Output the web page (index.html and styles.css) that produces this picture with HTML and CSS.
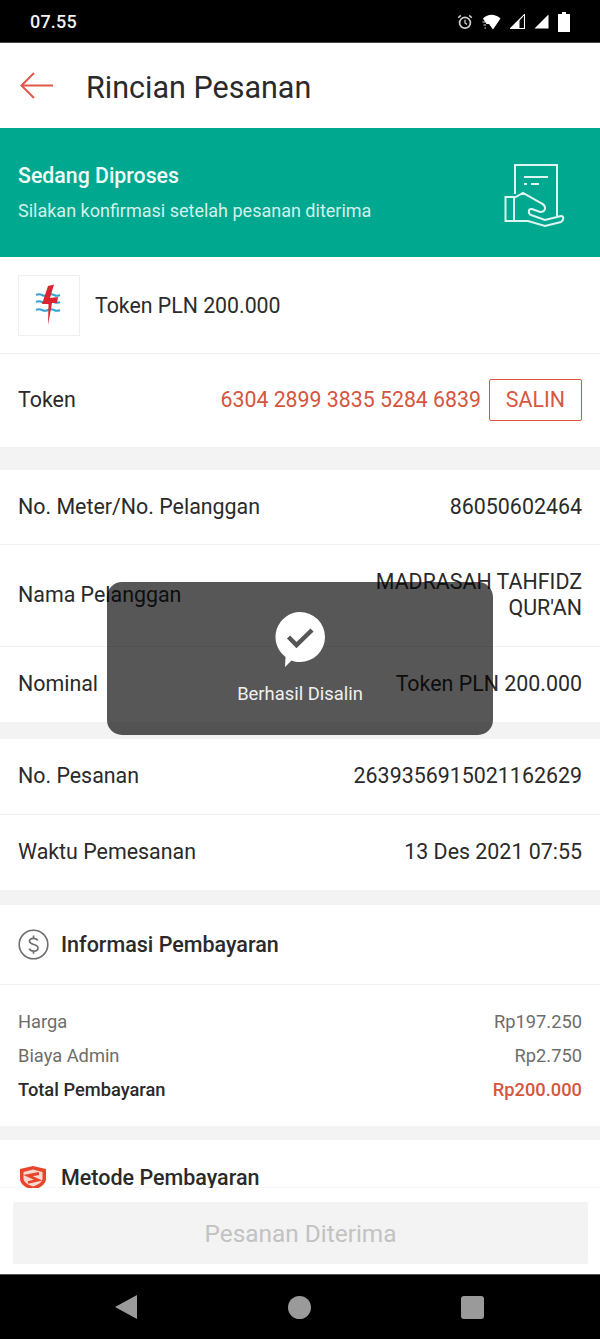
FILE: index.html
```html
<!DOCTYPE html>
<html lang="id">
<head>
<meta charset="utf-8">
<title>Rincian Pesanan</title>
<link rel="stylesheet" href="styles.css">
</head>
<body>
<div class="phone">
  <div class="statusbar">
    <span class="time">07.55</span>
    <div class="status-icons">
      <svg width="16" height="16" viewBox="0 0 16 16"><circle cx="8" cy="8.800" r="5.400" fill="none" stroke="#cfcfcf" stroke-width="1.700"/><path d="M8 5.800v3.200l2 1.400" fill="none" stroke="#cfcfcf" stroke-width="1.300"/><path d="M1.200 3.800 3.800 1.400M14.800 3.800 12.200 1.400" stroke="#cfcfcf" stroke-width="1.500"/></svg>
      <svg width="19" height="16" viewBox="0 0 19 16"><path d="M1 4.500C6-.5 13-.5 18.500 4.500L11 15.500 7 10H4.500z" fill="#fff"/><path d="M.5 8h3M1.500 11h2.500M2.500 14h1.500" stroke="#ddd" stroke-width="1.200"/></svg>
      <svg width="15" height="15" viewBox="0 0 15 15"><path d="M.5 14.500 14.500.5v14z" fill="none" stroke="#fff" stroke-width="1.100"/><path d="M.5 14.500 9.500 5.500v9z" fill="#fff"/></svg>
      <svg width="15" height="15" viewBox="0 0 15 15"><path d="M.5 14.500 14.500.5v14z" fill="#fff"/></svg>
      <svg width="12" height="20" viewBox="0 0 12 20"><path d="M4 0h4v2h4v18H0V2h4z" fill="#fff"/></svg>
    </div>
  </div>

  <header class="appbar">
    <svg class="back" width="36" height="32" viewBox="0 0 36 32"><path d="M34 15.500H3M15 3 2.500 15.500 15 28" fill="none" stroke="#e2574a" stroke-width="2"/></svg>
    <h1 class="title">Rincian Pesanan</h1>
  </header>

  <section class="banner">
    <div class="banner-text">
      <div class="banner-title">Sedang Diproses</div>
      <div class="banner-sub">Silakan konfirmasi setelah pesanan diterima</div>
    </div>
    <svg class="banner-icon" width="62" height="64" viewBox="503 163 62 64" fill="none" stroke="#dcf5f0" stroke-width="2">
      <path d="M515 194V165H557V216"/>
      <path d="M524 177H548M524 184h3M531 184h8"/>
      <path d="M505.500 197H514V221H505.500zM514 198 523 193 541 203C547 206 546 212 540 212L532 209C528 208 528 214 531 215L545 220 561 216C564 216 564 220 561 222L545 226 528 221H514"/>
    </svg>
  </section>

  <section class="product">
    <div class="logo">
      <svg width="30" height="44" viewBox="0 0 30 44">
        <path d="M2 12q3-1.500 6 0t6 0 6 0 6 0M2 19q3-1.500 6 0t6 0 6 0 6 0M2 27q3-1.500 6 0t6 0 6 0 6 0" fill="none" stroke="#3ba3d0" stroke-width="2"/>
        <path d="M14 3 20 1.500 16 15 24 14 23 20 18 20 14 42 14.500 21 8 21z" fill="#d92432"/>
      </svg>
    </div>
    <span class="product-name">Token PLN 200.000</span>
  </section>

  <section class="row row-token">
    <span class="token-label">Token</span>
    <div class="token-value">
      <span class="token-code">6304 2899 3835 5284 6839</span>
      <span class="copy-btn">SALIN</span>
    </div>
  </section>

  <div class="gap gap-22"></div>

  <section class="row row-75 line"><span>No. Meter/No. Pelanggan</span><span>86050602464</span></section>
  <section class="row row-101 line"><span>Nama Pelanggan</span><span class="multi">MADRASAH TAHFIDZ<br>QUR'AN</span></section>
  <section class="row row-75"><span>Nominal</span><span>Token PLN 200.000</span></section>

  <div class="gap gap-17"></div>

  <section class="row row-76 line"><span>No. Pesanan</span><span>2639356915021162629</span></section>
  <section class="row row-75"><span>Waktu Pemesanan</span><span>13 Des 2021 07:55</span></section>

  <div class="gap gap-15"></div>

  <section class="sec-head sec-head-info">
    <svg width="31" height="31" viewBox="0 0 31 31"><circle cx="15.500" cy="15.500" r="14.300" fill="none" stroke="#6e6e6e" stroke-width="1.600"/><path d="M19.700 11.500c-.6-1.300-2.100-2.200-4.200-2.200-2.400 0-4 1.200-4 3 0 4 8.500 2.500 8.500 6.600 0 1.900-1.800 3.200-4.400 3.200-2.100 0-3.700-.9-4.400-2.400M15.500 6.500v2.800M15.500 22v2.800" fill="none" stroke="#6e6e6e" stroke-width="1.700"/></svg>
    <span class="sec-title">Informasi Pembayaran</span>
  </section>

  <section class="prices">
    <div class="price-row"><span>Harga</span><span>Rp197.250</span></div>
    <div class="price-row"><span>Biaya Admin</span><span>Rp2.750</span></div>
    <div class="price-row price-total"><span>Total Pembayaran</span><span class="total-amount">Rp200.000</span></div>
  </section>

  <div class="gap gap-14"></div>

  <section class="sec-head sec-head-method">
    <svg width="28" height="26" viewBox="0 0 28 26"><path d="M14 1 27 4v10c0 5-6 9-13 11C7 23 1 19 1 14V4z" fill="#e8452c"/><path d="M14 4.500 23.500 7v6.500c0 3.500-4.500 6.500-9.500 8-5-1.500-9.500-4.500-9.500-8V7z" fill="#f9d8d0"/><path d="M20 8.500 9 10.500l10 4.500-10 2.500" fill="none" stroke="#e8452c" stroke-width="2.800"/></svg>
    <span class="sec-title">Metode Pembayaran</span>
  </section>

  <footer class="footer"><div class="confirm">Pesanan Diterima</div></footer>

  <nav class="navbar">
    <svg width="24" height="26" viewBox="0 0 24 26"><path d="M1 13 23 1v24z" fill="#9a9a9a"/></svg>
    <span class="nav-home"></span>
    <span class="nav-recent"></span>
  </nav>

  <div class="toast">
    <svg width="50" height="56" viewBox="0 0 50 56"><path d="M25 0a25 25 0 0 1 0 50c-3 0-6-.5-8.500-1.500L10 55l.5-10A25 25 0 0 1 25 0z" fill="#fff"/><path d="M13.500 25l8 8L37 18" fill="none" stroke="#555" stroke-width="4.500"/></svg>
    <span class="toast-text">Berhasil Disalin</span>
  </div>
</div>
</body>
</html>
```
FILE: styles.css
```css
* { box-sizing: border-box; }
html, body { margin: 0; padding: 0; }
body { font-family: Roboto, "Liberation Sans", sans-serif; color: #222; background: #fff; }
.phone { position: relative; width: 600px; height: 1339px; overflow: hidden; display: flex; flex-direction: column; }

.statusbar { flex: none; height: 43px; background: #000; border-bottom: 1px solid #444; display: flex; align-items: center; justify-content: space-between; padding: 1px 30px 0 30px; color: #f2f2f2; }
.time { font-size: 18px; font-weight: 500; letter-spacing: .2px; }
.status-icons { display: flex; align-items: center; gap: 9px; }

.appbar { flex: none; height: 85px; display: flex; align-items: center; padding: 0 0 0 19px; gap: 31px; }
.title { margin: 3px 0 0; font-size: 30.500px; font-weight: 400; color: #2a2a2a; }

.banner { flex: none; height: 129px; background: #00a88f; display: flex; align-items: center; justify-content: space-between; padding: 0 35px 0 18px; color: #fff; }
.banner-text { padding-bottom: 1px; }
.banner-title { font-size: 21.300px; font-weight: 500; color: #f2fbf9; margin-bottom: 12px; }
.banner-sub { font-size: 18px; color: #d4f1eb; }
.banner-icon { margin-top: 5px; }

.product { flex: none; height: 97px; display: flex; align-items: center; padding: 0 18px; gap: 15px; border-bottom: 1px solid #f0f0f0; }
.logo { width: 62px; height: 61px; border: 1px solid #efefef; display: flex; align-items: center; justify-content: center; }
.product-name { font-size: 21.300px; color: #2c2c2c; }

.row { flex: none; display: flex; align-items: center; justify-content: space-between; padding: 0 18px 2px; font-size: 21.400px; color: #2a2a2a; background: #fff; }
.row-token { height: 94px; border-bottom: 1px solid #f0f0f0; }
.row-75 { height: 75px; }
.row-76 { height: 76px; }
.row-101 { height: 102px; }
.line { border-bottom: 1px solid #f0f0f0; }
.multi { text-align: right; line-height: 26px; }
.token-label { margin-bottom: 1px; }
.token-value { display: flex; align-items: center; gap: 8px; }
.token-code { color: #d4563f; font-size: 21.300px; margin-bottom: 1px; }
.copy-btn { width: 93px; height: 42px; border: 1px solid #d9573f; border-radius: 2px; color: #d9573f; display: flex; align-items: center; justify-content: center; }

.gap { flex: none; background: #f3f3f3; }
.gap-22 { height: 22px; }
.gap-17 { height: 17px; }
.gap-15 { height: 15px; }
.gap-14 { height: 14px; }

.sec-head { flex: none; display: flex; align-items: center; padding: 0 18px; gap: 12px; background: #fff; }
.sec-head-info { height: 80px; border-bottom: 1px solid #f0f0f0; }
.sec-head-method { height: 48px; padding-top: 28px; border-bottom: 1px solid #f6f6f6; gap: 14px; padding-left: 19px; }
.sec-title { font-size: 21.500px; font-weight: 500; color: #2a2a2a; }

.prices { flex: none; height: 141px; padding: 19px 18px 0; display: flex; flex-direction: column; }
.price-row { display: flex; justify-content: space-between; align-items: center; height: 34px; font-size: 18.300px; color: #6d6d6d; }
.price-total { color: #2a2a2a; font-weight: 500; }
.total-amount { color: #d4563f; }

.footer { flex: none; height: 86px; padding: 14px 12px 10px 13px; background: #fff; }
.confirm { height: 100%; background: #f3f3f3; color: #c2c2c2; font-size: 24.400px; display: flex; align-items: center; justify-content: center; border-radius: 2px; }

.navbar { flex: 1; background: #000; border-top: 1px solid #555; display: flex; align-items: center; justify-content: space-between; padding: 0 116px 0 114px; }
.nav-home { width: 23px; height: 23px; border-radius: 50%; background: #9a9a9a; }
.nav-recent { width: 23px; height: 23px; border-radius: 3px; background: #9a9a9a; }

.toast { position: absolute; left: 107px; top: 582px; width: 386px; height: 153px; background: rgba(0,0,0,.66); border-radius: 15px; display: flex; flex-direction: column; align-items: center; padding-top: 30px; }
.toast-text { margin-top: 15px; font-size: 18.400px; color: #f0f0f0; }
```
